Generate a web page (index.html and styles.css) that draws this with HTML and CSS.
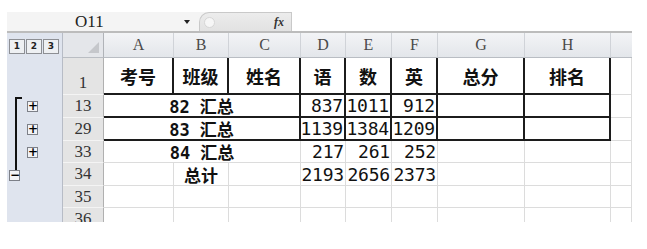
FILE: index.html
```html
<!DOCTYPE html>
<html lang="zh-CN">
<head>
<meta charset="utf-8">
<title>分类汇总</title>
<link rel="stylesheet" href="styles.css">
</head>
<body>
<div class="app">
  <div class="fbar">
    <div class="namebox">O11</div>
    <div class="drop"></div>
    <div class="pill"><span class="knob"></span><span class="fx">fx</span></div>
    <div class="formula"></div>
  </div>
  <div class="sheet">
    <div class="outline">
      <div class="levels"><span class="lv">1</span><span class="lv">2</span><span class="lv">3</span></div>
      <div class="plus r13">+</div>
      <div class="plus r29">+</div>
      <div class="plus r33">+</div>
      <div class="group"><div class="bracket"></div><div class="minus">−</div></div>
    </div>
    <div class="grid">
      <div class="ch corner"><span class="tri"></span></div>
      <div class="ch">A</div><div class="ch">B</div><div class="ch">C</div><div class="ch">D</div>
      <div class="ch">E</div><div class="ch">F</div><div class="ch">G</div><div class="ch">H</div><div class="ch last"></div>

      <div class="rh rh1">1</div>
      <div class="c hd tb tr">考号</div><div class="c hd tb tr">班级</div><div class="c hd tb tr">姓名</div>
      <div class="c hd tb tr">语</div><div class="c hd tb tr">数</div><div class="c hd tb tr">英</div>
      <div class="c hd tb tr">总分</div><div class="c hd tb tr">排名</div><div class="c"></div>

      <div class="rh">13</div>
      <div class="c sub span3 tb tr">82 汇总</div>
      <div class="c num tb tr">837</div><div class="c num tb tr">1011</div><div class="c num tb tr">912</div>
      <div class="c tb tr"></div><div class="c tb tr"></div><div class="c"></div>

      <div class="rh">29</div>
      <div class="c sub span3 tb tr">83 汇总</div>
      <div class="c num tb tr">1139</div><div class="c num tb tr">1384</div><div class="c num tb tr">1209</div>
      <div class="c tb tr"></div><div class="c tb tr"></div><div class="c"></div>

      <div class="rh">33</div>
      <div class="c sub span3">84 汇总</div>
      <div class="c num">217</div><div class="c num">261</div><div class="c num">252</div>
      <div class="c"></div><div class="c"></div><div class="c"></div>

      <div class="rh">34</div>
      <div class="c"></div><div class="c sub">总计</div><div class="c"></div>
      <div class="c num">2193</div><div class="c num">2656</div><div class="c num">2373</div>
      <div class="c"></div><div class="c"></div><div class="c"></div>

      <div class="rh">35</div>
      <div class="c"></div><div class="c"></div><div class="c"></div><div class="c"></div><div class="c"></div>
      <div class="c"></div><div class="c"></div><div class="c"></div><div class="c"></div>

      <div class="rh">36</div>
      <div class="c"></div><div class="c"></div><div class="c"></div><div class="c"></div><div class="c"></div>
      <div class="c"></div><div class="c"></div><div class="c"></div><div class="c"></div>
    </div>
  </div>
</div>
</body>
</html>
```
FILE: styles.css
```css
* { box-sizing: border-box; }
html, body { margin: 0; padding: 0; background: #fff; }
body { width: 647px; height: 249px; overflow: hidden; }

.app {
  margin: 12px 0 0 7px;
  width: 625px;
}

/* formula bar */
.fbar {
  height: 21px;
  display: flex;
  align-items: center;
  background: #f4f4f4;
  border-bottom: 2px solid #bcbcbc;
}
.namebox {
  width: 170px;
  padding-left: 68px;
  font-family: "Liberation Serif", serif;
  font-size: 17px;
  color: #222;
  line-height: 19px;
}
.drop {
  width: 0; height: 0;
  margin-left: 7px;
  border-left: 3.5px solid transparent;
  border-right: 3.5px solid transparent;
  border-top: 4px solid #222;
}
.pill {
  margin-left: 9px;
  width: 93px;
  height: 19px;
  align-self: flex-end;
  background: linear-gradient(#ececec, #e2e2e2);
  border: 1px solid #c9c9c9;
  border-bottom: none;
  border-radius: 10px 0 0 0;
  display: flex;
  align-items: center;
  padding-left: 4px;
}
.knob {
  width: 11px; height: 11px;
  border-radius: 50%;
  background: #f6f6f6;
  border: 1px solid #d6d6d6;
}
.fx {
  margin-left: auto;
  margin-right: 7px;
  font-family: "Liberation Serif", serif;
  font-style: italic;
  font-weight: bold;
  font-size: 12px;
  color: #333;
}
.formula {
  flex: 1;
  align-self: stretch;
  background: #fff;
}

/* sheet */
.sheet {
  display: flex;
  height: 189px;
  overflow: hidden;
}
.outline {
  width: 56px;
  background: #dfe4ee;
  border-right: 1px solid #b7bcc6;
  display: grid;
  grid-template-columns: 56px;
  grid-template-rows: 25px 37px 23px 23px 22px 23px 22px 22px;
}
.levels {
  grid-row: 1;
  grid-column: 1;
  display: flex;
  gap: 1px;
  padding: 6px 0 0 2px;
}
.lv {
  width: 16px;
  height: 15px;
  border: 1px solid #8d8f94;
  background: #eef0f3;
  font-family: "DejaVu Sans", sans-serif;
  font-weight: bold;
  font-size: 9px;
  line-height: 13px;
  text-align: center;
  color: #222;
}
.plus, .minus {
  width: 11px;
  height: 11px;
  border: 1px solid #7d8088;
  background: #f2f3f6;
  font-family: "DejaVu Sans", sans-serif;
  font-weight: bold;
  font-size: 12px;
  line-height: 9px;
  text-align: center;
  color: #000;
}
.plus {
  grid-column: 1;
  align-self: center;
  margin-left: 20px;
}
.r13 { grid-row: 3; }
.r29 { grid-row: 4; }
.r33 { grid-row: 5; }
.group {
  grid-column: 1;
  grid-row: 3 / 7;
  display: flex;
  flex-direction: column;
  padding: 2px 0 5px 2px;
}
.bracket {
  flex: 1;
  width: 7px;
  margin-left: 6px;
  border-left: 2px solid #111;
  border-top: 2px solid #111;
}
.minus { line-height: 8px; }

.grid {
  display: grid;
  grid-template-columns: 41px 70px 55px 72px 45px 46px 46px 87px 86px 21px;
  grid-template-rows: 25px 37px 23px 23px 22px 23px 22px 22px;
  width: 569px;
}
.ch {
  background: linear-gradient(#f3f4f6, #e3e6ea);
  border-right: 1px solid #d0d3d8;
  border-bottom: 1px solid #b9bdc3;
  font-family: "Liberation Serif", serif;
  font-size: 16px;
  color: #4a4a4a;
  display: flex;
  align-items: center;
  justify-content: center;
}
.ch.last { border-right: none; }
.corner {
  background: #e4e6ea;
  border-right: 1px solid #b0b3b8;
  position: relative;
}
.tri {
  position: absolute;
  right: 4px;
  bottom: 4px;
  width: 0; height: 0;
  border-left: 11px solid transparent;
  border-bottom: 11px solid #c5c7cb;
}
.rh {
  background: #e4e4e4;
  border-right: 1px solid #b0b0b0;
  border-bottom: 1px solid #f4f4f4;
  font-family: "Liberation Serif", serif;
  font-size: 17px;
  color: #333;
  display: flex;
  align-items: center;
  justify-content: center;
}
.rh1 { align-items: flex-end; padding-bottom: 1px; }
.c {
  border-right: 1px solid #dcdcdc;
  border-bottom: 1px solid #dcdcdc;
  display: flex;
  align-items: center;
  justify-content: center;
  color: #111;
  white-space: nowrap;
}
.tb { border-bottom: 2px solid #1c1c1c; }
.tr { border-right: 2px solid #1c1c1c; }
.span3 { grid-column: span 3; }
.hd {
  font-family: "Noto Sans CJK SC", sans-serif;
  font-weight: bold;
  font-size: 18px;
}
.sub {
  font-family: "DejaVu Sans Mono", "Noto Sans CJK SC", monospace;
  font-weight: bold;
  font-size: 17px;
}
.num {
  justify-content: flex-end;
  padding-right: 1px;
  font-family: "DejaVu Sans Mono", monospace;
  font-size: 18px;
  letter-spacing: -0.2px;
}
```
